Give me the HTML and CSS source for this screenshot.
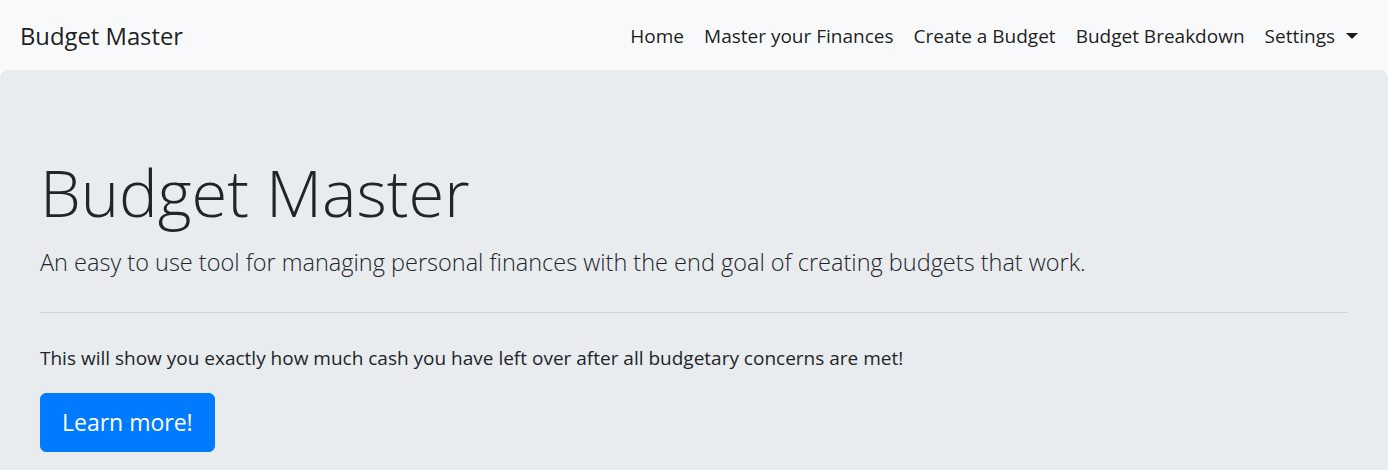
FILE: index.html
```html
<!DOCTYPE html>
<html lang="en">
<head>
<meta charset="utf-8">
<title>Budget Master</title>
<link rel="stylesheet" href="styles.css">
</head>
<body>
<nav class="navbar">
  <a class="brand" href="#">Budget Master</a>
  <ul class="nav">
    <li><a class="nav-link" href="#">Home</a></li>
    <li><a class="nav-link" href="#">Master your Finances</a></li>
    <li><a class="nav-link" href="#">Create a Budget</a></li>
    <li><a class="nav-link" href="#">Budget Breakdown</a></li>
    <li><a class="nav-link dropdown" href="#">Settings<span class="caret"></span></a></li>
  </ul>
</nav>
<main class="jumbotron">
  <h1 class="display">Budget Master</h1>
  <p class="lead">An easy to use tool for managing personal finances with the end goal of creating budgets that work.</p>
  <hr class="divider">
  <p class="body-text">This will show you exactly how much cash you have left over after all budgetary concerns are met!</p>
  <p class="lead action"><a class="btn" href="#">Learn more!</a></p>
</main>
</body>
</html>
```
FILE: styles.css
```css
* { box-sizing: border-box; }
html, body { margin: 0; padding: 0; }
body {
  font-family: "Open Sans", "Noto Sans", "Liberation Sans", sans-serif;
  font-size: 19px;
  line-height: 30px;
  color: #212529;
  background: #fff;
}
a { text-decoration: none; }
.navbar {
  display: flex;
  align-items: center;
  justify-content: space-between;
  padding: 11px 20px 9px;
  background: #f8f9fa;
}
.brand {
  font-size: 23.8px;
  line-height: 37.5px;
  padding: 7.25px 0 5.25px;
  color: rgba(0,0,0,.9);
}
.nav {
  list-style: none;
  margin: 0;
  padding: 0;
  display: flex;
}
.nav-link {
  display: block;
  padding: 10px 10px;
  font-size: 19px;
  line-height: 30px;
  color: rgba(0,0,0,.9);
}
.caret {
  display: inline-block;
  margin-left: 11px;
  vertical-align: 4px;
  border-top: 6px solid;
  border-left: 6px solid transparent;
  border-right: 6px solid transparent;
  border-bottom: 0;
}
.jumbotron {
  background: #e9ecef;
  border-radius: 7.5px;
  padding: 80px 40px;
}
.display {
  font-size: 65px;
  font-weight: 300;
  line-height: 84px;
  margin: 0 0 10px;
}
.lead {
  font-size: 23.5px;
  font-weight: 300;
  line-height: 37.5px;
  margin: 0 0 20px;
}
.divider {
  border: 0;
  border-top: 1px solid rgba(0,0,0,.1);
  margin: 30px 0;
}
.body-text { margin: 0 0 20px; }
.btn {
  display: inline-block;
  padding: 10px 21px;
  font-size: 23px;
  line-height: 37.5px;
  font-weight: 400;
  color: #fff;
  background: #007bff;
  border: 1px solid #007bff;
  border-radius: 6px;
}
```
